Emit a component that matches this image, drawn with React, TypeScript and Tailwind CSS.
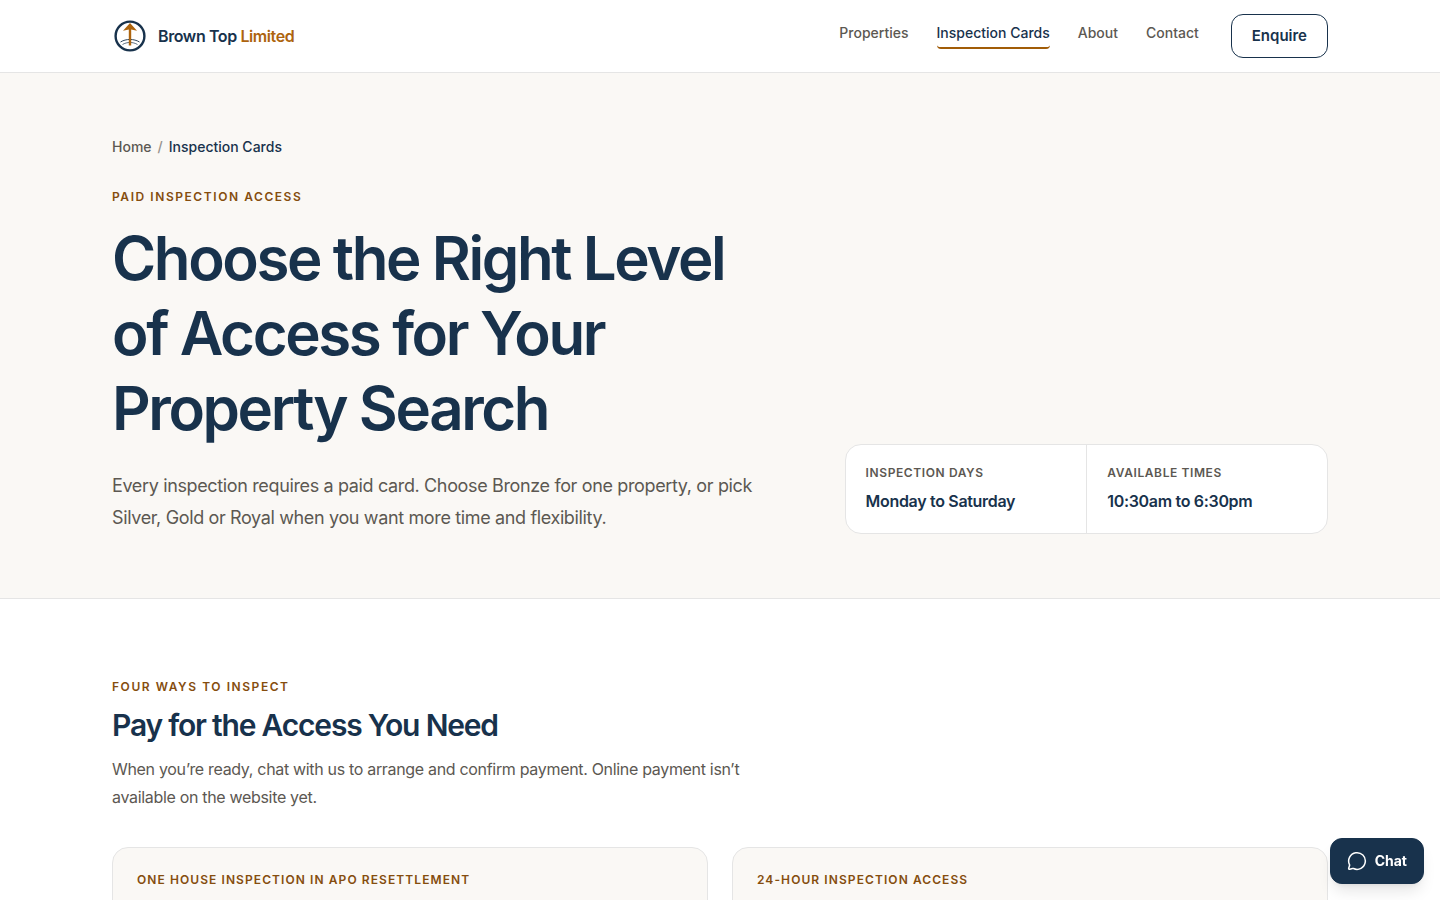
import { MessageCircle } from 'lucide-react';

const navLinks = [
  { label: 'Properties', href: '#properties' },
  { label: 'Inspection Cards', href: '#inspection-cards', active: true },
  { label: 'About', href: '#about' },
  { label: 'Contact', href: '#contact' },
];

const schedule = [
  { label: 'Inspection days', value: 'Monday to Saturday' },
  { label: 'Available times', value: '10:30am to 6:30pm' },
];

const cards = ['One house inspection in Apo Resettlement', '24-hour inspection access'];

const Logo = () => (
  <svg viewBox="0 0 36 36" className="size-9" fill="none" aria-hidden="true">
    <circle cx="18" cy="18" r="14.4" stroke="#18324c" strokeWidth="2.4" />
    <path d="M8.5 24C14 20.6 22 20.6 27.5 24" stroke="#18324c" strokeWidth="0.9" />
    <path d="M10.5 26.5C15 23.8 21 23.8 25.5 26.5" stroke="#18324c" strokeWidth="0.7" />
    <path d="M18 5L25 12.8L19.2 11.6V27.5H16.8V11.6L11 12.8Z" fill="#ad640e" />
  </svg>
);

const Header = () => (
  <header className="border-b border-[#e5e5e5] bg-white">
    <div className="mx-auto flex h-18 max-w-7xl items-center justify-between px-8">
      <a href="#home" className="flex items-center gap-2.5 text-base font-semibold tracking-tight">
        <Logo />
        <span>
          Brown Top <span className="text-[#ad640e]">Limited</span>
        </span>
      </a>
      <div className="flex items-center gap-8">
        <nav className="flex items-center gap-7 text-sm font-medium">
          {navLinks.map((link) => (
            <a
              key={link.label}
              href={link.href}
              className={
                link.active
                  ? 'rounded-sm border-b-2 border-[#a15c07] pb-1'
                  : 'rounded-sm border-b-2 border-transparent pb-1 text-[#5c5852]'
              }
            >
              {link.label}
            </a>
          ))}
        </nav>
        <button type="button" className="h-11 rounded-xl border border-[#18324c] px-5 text-[15px] font-semibold">
          Enquire
        </button>
      </div>
    </div>
  </header>
);

const Hero = () => (
  <section className="border-b border-[#e5e5e5] bg-[#faf8f5]">
    <div className="mx-auto max-w-7xl px-8 py-16">
      <nav aria-label="Breadcrumb" className="flex gap-1.5 text-sm font-medium">
        <a href="#home" className="text-[#5c5852]">Home</a>
        <span className="text-[#96928c]">/</span>
        <span>Inspection Cards</span>
      </nav>
      <div className="mt-8 grid grid-cols-[1.35fr_1fr] items-end gap-20">
        <div>
          <p className="text-xs font-semibold tracking-[0.13em] text-[#854d0e] uppercase">Paid inspection access</p>
          <h1 className="mt-4 text-[60px] leading-[75px] font-semibold tracking-[-0.04em]">
            Choose the Right Level of Access for Your Property Search
          </h1>
          <p className="mt-6 text-lg leading-8 tracking-[-0.02em] text-[#5c5852]">
            Every inspection requires a paid card. Choose Bronze for one property, or pick Silver, Gold or Royal when
            you want more time and flexibility.
          </p>
        </div>
        <dl className="grid grid-cols-2 rounded-2xl border border-[#e5e5e5] bg-white">
          {schedule.map((item) => (
            <div key={item.label} className="border-[#e5e5e5] p-5 not-first:border-l">
              <dt className="text-xs font-semibold tracking-wider text-[#5c5852] uppercase">{item.label}</dt>
              <dd className="mt-2 text-base font-semibold tracking-[-0.02em]">{item.value}</dd>
            </div>
          ))}
        </dl>
      </div>
    </div>
  </section>
);

const AccessCards = () => (
  <section className="mx-auto max-w-7xl px-8 py-20">
    <div className="max-w-2xl">
      <p className="text-xs font-semibold tracking-[0.13em] text-[#854d0e] uppercase">Four ways to inspect</p>
      <h2 className="mt-2 text-3xl leading-11 font-semibold tracking-[-0.04em]">Pay for the Access You Need</h2>
      <p className="mt-2 text-base leading-7 tracking-[-0.02em] text-[#5c5852]">
        When you’re ready, chat with us to arrange and confirm payment. Online payment isn’t available on the website
        yet.
      </p>
    </div>
    <div className="mt-9 grid grid-cols-2 gap-6">
      {cards.map((title) => (
        <article key={title} className="min-h-80 rounded-2xl border border-[#e5e5e5] bg-[#faf8f5] p-6">
          <h3 className="text-xs font-semibold tracking-[0.09em] text-[#854d0e] uppercase">{title}</h3>
        </article>
      ))}
    </div>
  </section>
);

const App = () => {
  return (
    <div className="h-screen overflow-hidden bg-white font-[Inter,sans-serif] text-[#18324c]">
      <Header />
      <main>
        <Hero />
        <AccessCards />
      </main>
      <button
        type="button"
        className="fixed right-4 bottom-4 flex items-center gap-2 rounded-xl border border-[#18324c] bg-[#18324c] px-4 py-3 text-sm font-bold text-white shadow-lg"
      >
        <MessageCircle className="size-5" strokeWidth={1.8} />
        Chat
      </button>
    </div>
  );
};

export default App;
